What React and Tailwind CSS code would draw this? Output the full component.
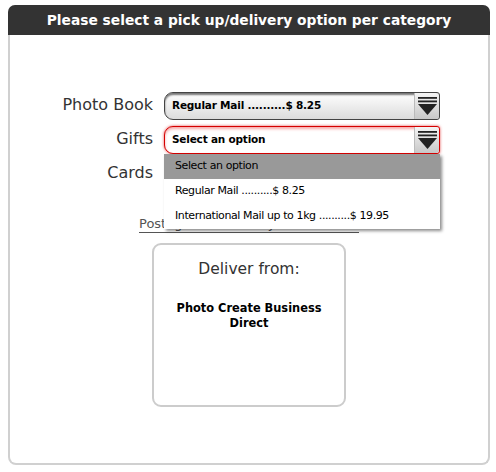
import React from "react";

function ArrowIcon() {
  return (
    <svg width="21" height="24" viewBox="0 0 21 24">
      <rect x="1" y="3" width="19" height="1.8" fill="#222" />
      <rect x="1" y="6.5" width="19" height="1.8" fill="#222" />
      <polygon points="1,10 20,10 10.5,21" fill="#222" />
    </svg>
  );
}

function Select({ value, error }) {
  return (
    <div
      className={
        "flex h-[28px] w-[276px] items-stretch rounded-l-[9px] rounded-r-[3px] border " +
        (error
          ? "border-[#d40000] bg-white shadow-[0_0_3px_rgba(220,0,0,0.7),inset_0_2px_3px_rgba(230,0,0,0.35)]"
          : "border-[#444] bg-gradient-to-b from-white to-[#dcdcdc] shadow-[inset_0_2px_2px_rgba(0,0,0,0.55)]")
      }
    >
      <div className="flex flex-1 items-center pl-[7px] text-[10.5px] font-bold tracking-[-0.2px] text-black">{value}</div>
      <div className="flex w-[25px] items-center justify-center rounded-r-[3px] border-l border-[#bbb] bg-gradient-to-b from-[#f4f4f4] to-[#c8c8c8]">
        <ArrowIcon />
      </div>
    </div>
  );
}

export default function App() {
  const font = { fontFamily: '"DejaVu Sans", Verdana, sans-serif' };
  return (
    <div className="h-[472px] w-[496px] bg-white pt-[5px]" style={font}>
      <div className="mx-[8px] flex h-[460px] w-[482px] flex-col rounded-[8px] border-2 border-t-0 border-[#d0d0d0] bg-white">
        <div className="-mx-[2px] flex h-[30px] items-center justify-center rounded-t-[7px] bg-[#333333] text-[13.8px] font-bold text-white">
          Please select a pick up/delivery option per category
        </div>
        <div className="flex flex-col gap-[6px] pt-[57px]">
          <div className="flex items-center">
            <div className="w-[154px] pr-[11px] pb-[3px] text-right text-[16px] text-[#333]">Photo Book</div>
            <Select value="Regular Mail ..........$ 8.25" />
          </div>
          <div className="flex items-center">
            <div className="w-[154px] pr-[11px] pb-[3px] text-right text-[16px] text-[#333]">Gifts</div>
            <div className="relative">
              <Select value="Select an option" error />
              <div className="absolute left-0 top-full z-10 w-[276px] bg-white text-[11px] tracking-[-0.4px] text-black shadow-[2px_2px_3px_rgba(0,0,0,0.45)]">
                <div className="flex h-[25px] items-center bg-[#999999] pl-[11px]">Select an option</div>
                <div className="flex h-[25px] items-center pl-[11px]">Regular Mail ..........$ 8.25</div>
                <div className="flex h-[25px] items-center pl-[11px]">International Mail up to 1kg ..........$ 19.95</div>
              </div>
            </div>
          </div>
          <div className="flex items-center">
            <div className="w-[154px] pr-[11px] pb-[3px] text-right text-[16px] text-[#333]">Cards</div>
            <Select value="Select an option" />
          </div>
        </div>
        <div className="mt-[27px] flex justify-center">
          <span className="w-[220px] overflow-hidden whitespace-nowrap text-[13px] leading-[18px] text-[#555] underline underline-offset-[4px]">
            Postage and delivery information (more)
          </span>
        </div>
        <div className="mt-[10px] flex justify-center">
          <div className="flex h-[164px] w-[194px] flex-col items-center rounded-[9px] border-2 border-[#cccccc] pt-[13px] text-center">
            <div className="text-[15.5px] text-[#333]">Deliver from:</div>
            <div className="mt-[20px] px-[8px] text-[11.4px] font-bold leading-[15px] text-black">
              Photo Create Business Direct
            </div>
          </div>
        </div>
      </div>
    </div>
  );
}
